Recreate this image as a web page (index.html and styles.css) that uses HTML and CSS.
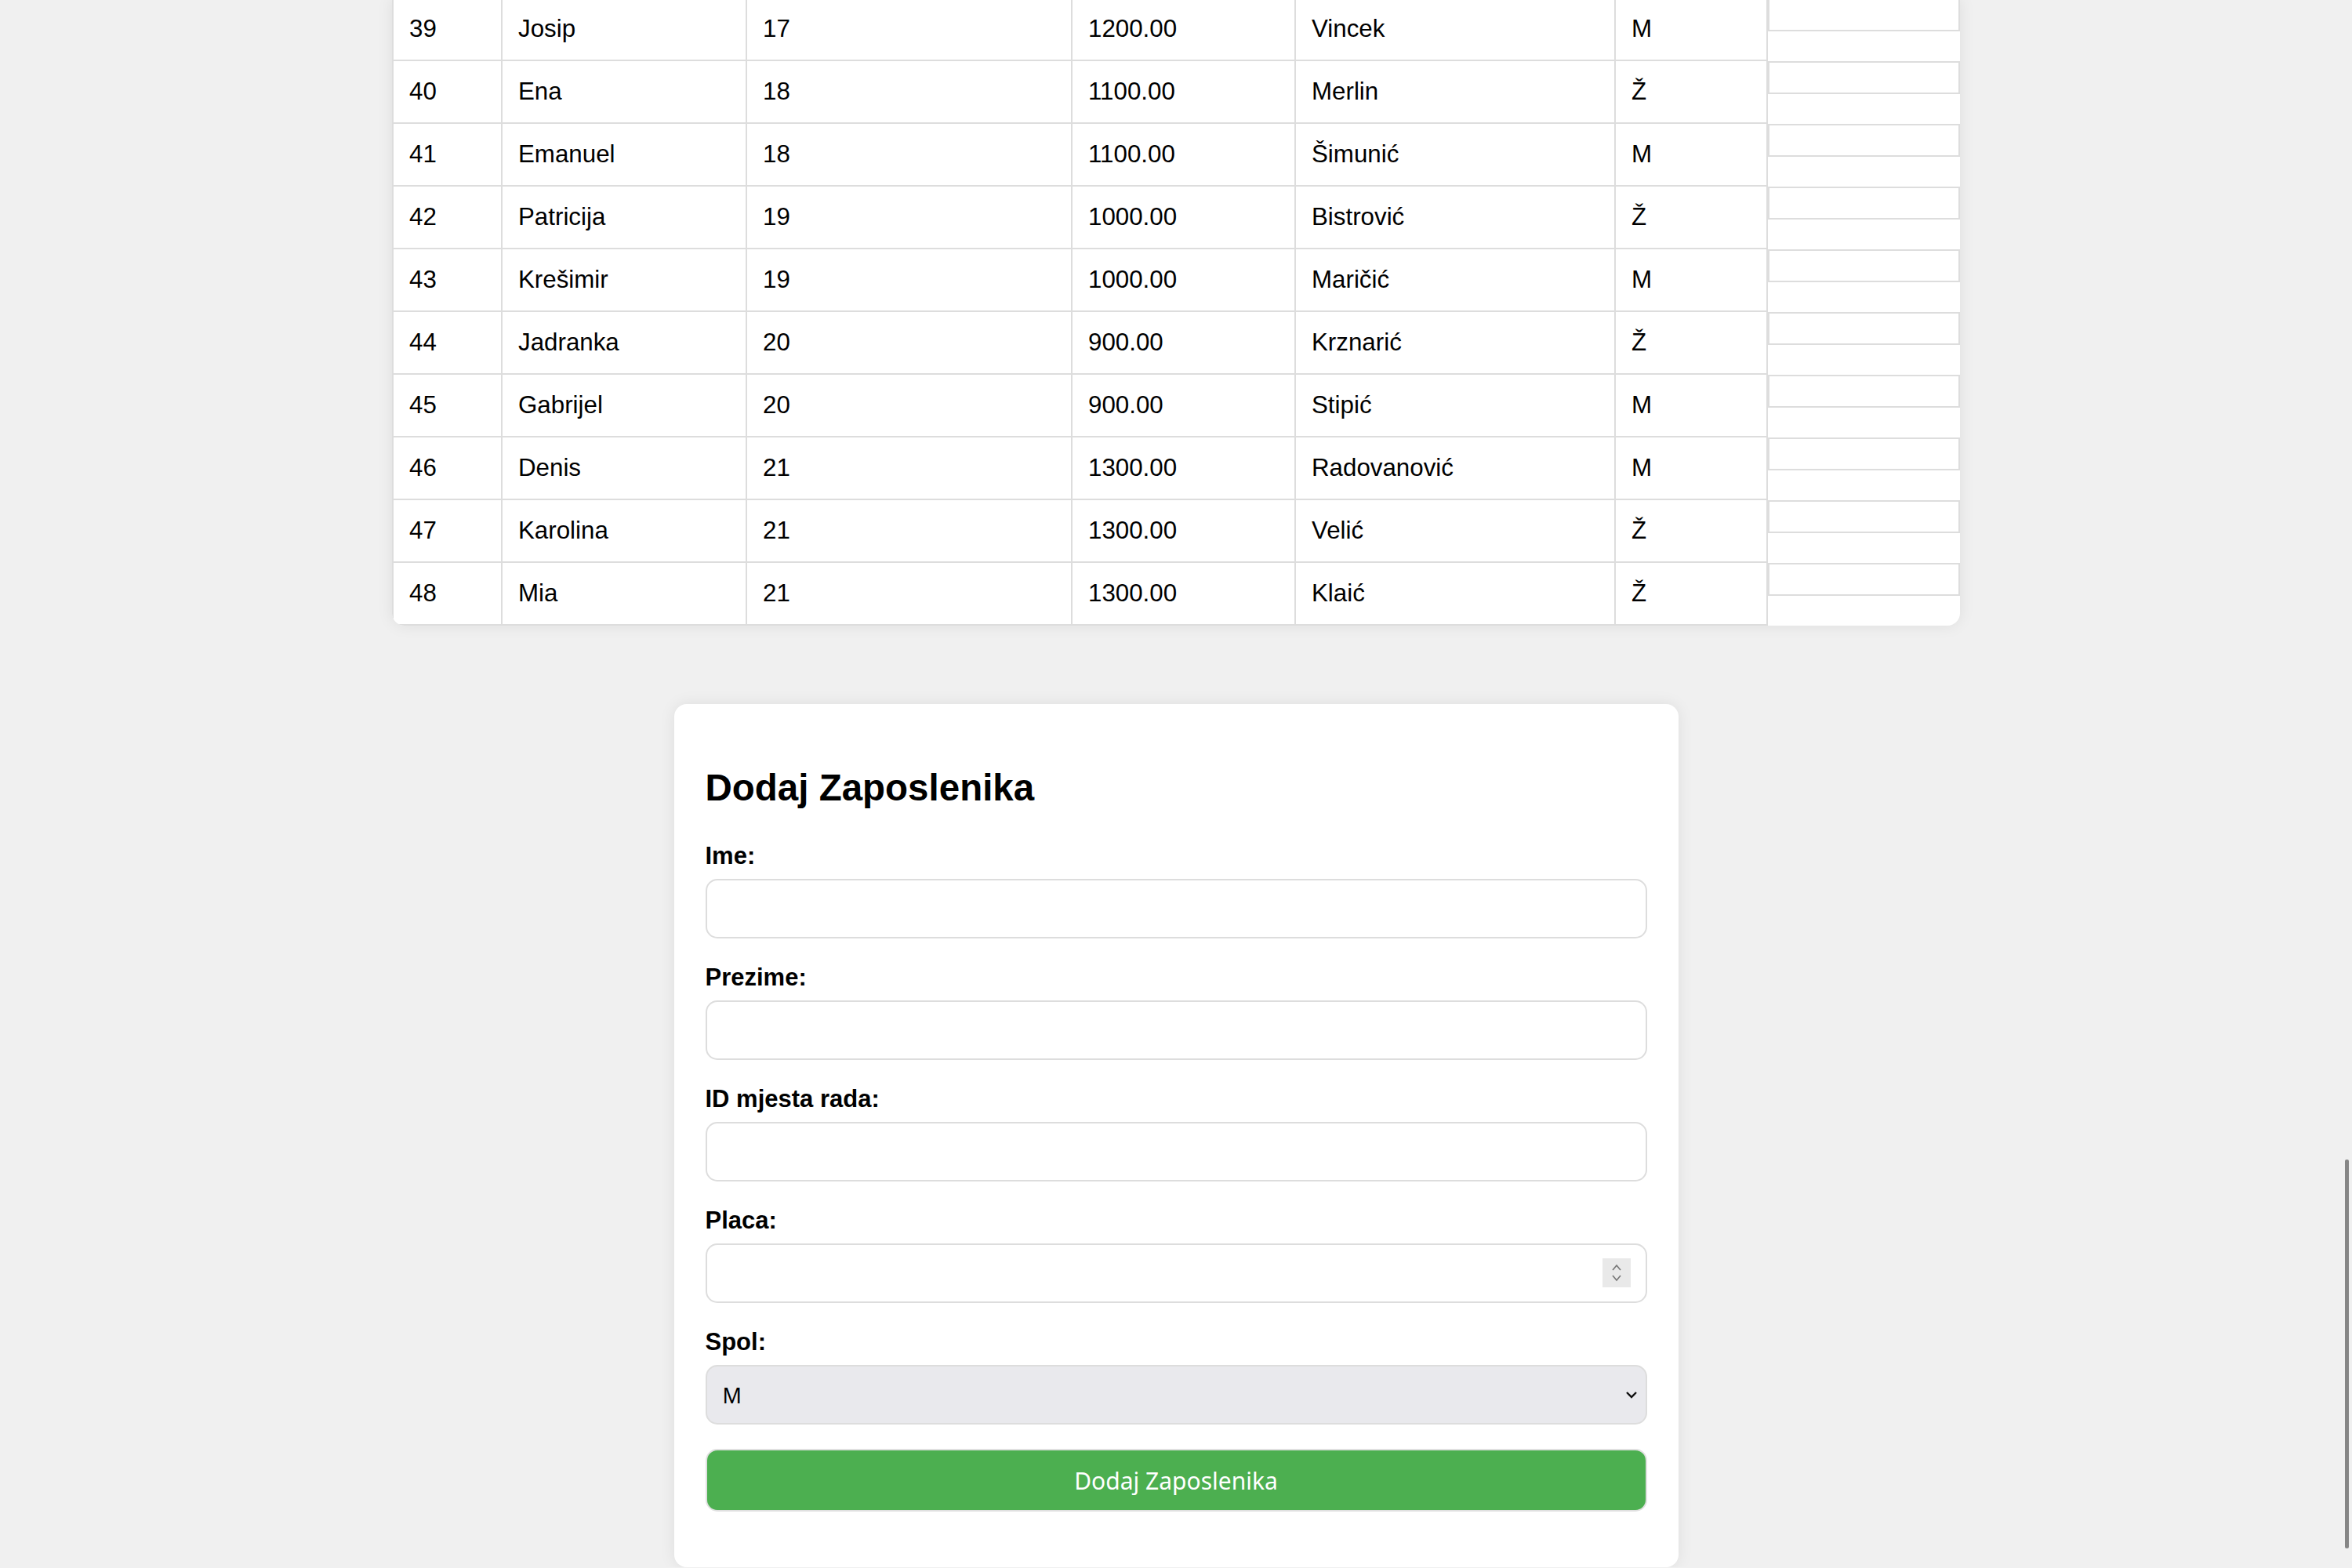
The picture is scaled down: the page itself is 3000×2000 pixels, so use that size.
FILE: index.html
```html
<!DOCTYPE html>
<html lang="hr">
<head>
<meta charset="utf-8">
<title>Zaposlenici</title>
<link rel="stylesheet" href="styles.css">
</head>
<body>
<main class="page">
  <div class="table-card">
    <table class="emp-table">
      <tbody>
        <tr><td class="c1">39</td><td class="c2">Josip</td><td class="c3">17</td><td class="c4">1200.00</td><td class="c5">Vincek</td><td class="c6">M</td><td class="c7"><div class="act-box"></div></td></tr>
        <tr><td class="c1">40</td><td class="c2">Ena</td><td class="c3">18</td><td class="c4">1100.00</td><td class="c5">Merlin</td><td class="c6">Ž</td><td class="c7"><div class="act-box"></div></td></tr>
        <tr><td class="c1">41</td><td class="c2">Emanuel</td><td class="c3">18</td><td class="c4">1100.00</td><td class="c5">Šimunić</td><td class="c6">M</td><td class="c7"><div class="act-box"></div></td></tr>
        <tr><td class="c1">42</td><td class="c2">Patricija</td><td class="c3">19</td><td class="c4">1000.00</td><td class="c5">Bistrović</td><td class="c6">Ž</td><td class="c7"><div class="act-box"></div></td></tr>
        <tr><td class="c1">43</td><td class="c2">Krešimir</td><td class="c3">19</td><td class="c4">1000.00</td><td class="c5">Maričić</td><td class="c6">M</td><td class="c7"><div class="act-box"></div></td></tr>
        <tr><td class="c1">44</td><td class="c2">Jadranka</td><td class="c3">20</td><td class="c4">900.00</td><td class="c5">Krznarić</td><td class="c6">Ž</td><td class="c7"><div class="act-box"></div></td></tr>
        <tr><td class="c1">45</td><td class="c2">Gabrijel</td><td class="c3">20</td><td class="c4">900.00</td><td class="c5">Stipić</td><td class="c6">M</td><td class="c7"><div class="act-box"></div></td></tr>
        <tr><td class="c1">46</td><td class="c2">Denis</td><td class="c3">21</td><td class="c4">1300.00</td><td class="c5">Radovanović</td><td class="c6">M</td><td class="c7"><div class="act-box"></div></td></tr>
        <tr><td class="c1">47</td><td class="c2">Karolina</td><td class="c3">21</td><td class="c4">1300.00</td><td class="c5">Velić</td><td class="c6">Ž</td><td class="c7"><div class="act-box"></div></td></tr>
        <tr><td class="c1">48</td><td class="c2">Mia</td><td class="c3">21</td><td class="c4">1300.00</td><td class="c5">Klaić</td><td class="c6">Ž</td><td class="c7"><div class="act-box"></div></td></tr>
      </tbody>
    </table>
  </div>

  <section class="form-card">
    <h2 class="form-title">Dodaj Zaposlenika</h2>
    <form class="emp-form">
      <label class="field-label" for="ime">Ime:</label>
      <input class="field" type="text" id="ime">

      <label class="field-label" for="prezime">Prezime:</label>
      <input class="field" type="text" id="prezime">

      <label class="field-label" for="mjesto">ID mjesta rada:</label>
      <input class="field" type="text" id="mjesto">

      <label class="field-label" for="placa">Placa:</label>
      <div class="num-wrap">
        <input class="field field-num" type="number" id="placa">
        <span class="spin" aria-hidden="true">
          <svg width="36" height="37" viewBox="0 0 36 37">
            <rect width="36" height="37" fill="#e9e9e9"/>
            <polyline points="13,15 18,9 23,15" fill="none" stroke="#777" stroke-width="1.7"/>
            <polyline points="13,22 18,28 23,22" fill="none" stroke="#777" stroke-width="1.7"/>
          </svg>
        </span>
      </div>

      <label class="field-label" for="spol">Spol:</label>
      <div class="sel-wrap">
        <select class="field field-sel" id="spol">
          <option>M</option>
          <option>Ž</option>
        </select>
        <svg class="sel-chev" width="16" height="10" viewBox="0 0 16 10" aria-hidden="true">
          <polyline points="2,2 8,8 14,2" fill="none" stroke="#111" stroke-width="2.4"/>
        </svg>
      </div>

      <button class="submit" type="button">Dodaj Zaposlenika</button>
    </form>
  </section>
</main>
<div class="scroll-thumb" aria-hidden="true"></div>
</body>
</html>
```

FILE: styles.css
```css
html {
  overflow: hidden;
  background: #f0f0f0;
}

body {
  margin: 0;
  background: #f0f0f0;
  font-family: "Liberation Sans", Arial, sans-serif;
  color: #000;
}

.page {
  display: flex;
  flex-direction: column;
  align-items: center;
}

.table-card {
  width: 2000px;
  margin-top: -2px;
  background: #fff;
  border-radius: 0 0 16px 16px;
  overflow: hidden;
  box-shadow: 0 0 20px rgba(0, 0, 0, 0.08);
}

.emp-table {
  width: 2000px;
  table-layout: fixed;
  border-collapse: separate;
  border-spacing: 0;
  font-size: 31.3px;
}

.emp-table td {
  box-sizing: border-box;
  padding: 21px 10px 21px 20px;
  line-height: 36px;
  border-right: 2px solid #ddd;
  border-bottom: 2px solid #ddd;
  white-space: nowrap;
  vertical-align: middle;
}

.emp-table td.c1 { width: 141px; border-left: 2px solid #ddd; }
.emp-table td.c2 { width: 312px; }
.emp-table td.c3 { width: 415px; }
.emp-table td.c4 { width: 285px; }
.emp-table td.c5 { width: 408px; }
.emp-table td.c6 { width: 194px; }
.emp-table td.c7 {
  width: 245px;
  padding: 0;
  border: none;
  vertical-align: top;
}

.act-box {
  box-sizing: border-box;
  width: 100%;
  height: 42px;
  border: 2px solid #ddd;
  background: #fff;
}

.form-card {
  box-sizing: border-box;
  width: 1281px;
  margin-top: 100px;
  padding: 40px;
  background: #fff;
  border-radius: 16px;
  box-shadow: 0 0 20px rgba(0, 0, 0, 0.08);
}

.form-title {
  margin: 40px 0 41px;
  font-size: 47.5px;
  line-height: 54px;
  font-weight: bold;
}

.emp-form {
  display: flex;
  flex-direction: column;
}

.field-label {
  display: block;
  font-size: 31px;
  line-height: 37px;
  font-weight: bold;
  margin-bottom: 11px;
}

.field {
  box-sizing: border-box;
  width: 100%;
  height: 76px;
  margin: 0 0 31px;
  padding: 0 20px;
  border: 2px solid #ddd;
  border-radius: 15px;
  background: #fff;
  font-family: "Noto Sans", "Liberation Sans", sans-serif;
  font-size: 27px;
  color: #000;
  outline: none;
}

.num-wrap,
.sel-wrap {
  position: relative;
}

.field-num {
  -moz-appearance: textfield;
}

.field-num::-webkit-inner-spin-button,
.field-num::-webkit-outer-spin-button {
  -webkit-appearance: none;
  margin: 0;
}

.spin {
  position: absolute;
  right: 21px;
  top: 19px;
  width: 36px;
  height: 37px;
  display: block;
}

.spin svg {
  display: block;
}

.field-sel {
  -webkit-appearance: none;
  appearance: none;
  background: #e9e9ed;
  padding: 0 20px;
}

.sel-chev {
  position: absolute;
  right: 12px;
  top: 33px;
  display: block;
}

.submit {
  box-sizing: border-box;
  width: 100%;
  height: 80px;
  margin: 0 0 31px;
  border: 2px solid #e0e0e0;
  border-radius: 15px;
  background: #4caf50;
  color: #fff;
  font-family: "Noto Sans", "Liberation Sans", sans-serif;
  font-size: 30px;
  cursor: pointer;
}

.scroll-thumb {
  position: fixed;
  right: 4px;
  top: 1479px;
  width: 5px;
  height: 496px;
  background: #868686;
  border-radius: 2px;
}
```
